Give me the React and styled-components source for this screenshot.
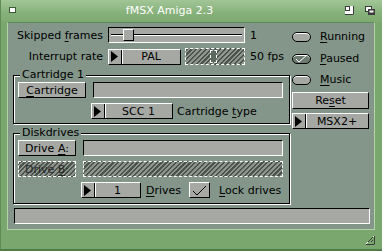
import React from 'react'
import styled, { createGlobalStyle, css } from 'styled-components'

const Global = createGlobalStyle`
  html, body { margin: 0; padding: 0; background: #79a76d; }
  body { font-family: "DejaVu Sans", "Liberation Sans", sans-serif; font-size: 11px; color: #000; }
`;

const PANEL = '#84968a';
const FACE = '#a6a8a3';

const Window = styled.div`
  width: 382px;
  height: 251px;
  box-sizing: border-box;
  background: #79a76d;
  border-left: 1px solid #5e8c53;
  border-bottom: 2px solid #4f7c46;
  display: flex;
  flex-direction: column;
`;

const TitleBar = styled.div`
  height: 22px;
  flex: none;
  display: flex;
  align-items: center;
  padding: 0 7px 2px 8px;
  box-sizing: border-box;
  background: linear-gradient(#a2c596, #86b17a 60%, #7eab72);
  color: #fff;
  font-size: 11px;
`;

const Title = styled.div`
  flex: 1;
  text-align: center;
  padding-right: 22px;
`;

const Gadgets = styled.div`
  display: flex;
  gap: 11px;
  align-items: center;
`;

const Frame = styled.div`
  flex: 1;
  display: flex;
  flex-direction: column;
  padding: 0 7px 0 6px;
`;

const Panel = styled.div`
  height: 208px;
  box-sizing: border-box;
  background: ${PANEL};
  border: 1px solid #b4d3a8;
  border-top-color: #5f8a55;
  padding: 4px 5px 0 5px;
  display: flex;
  flex-direction: column;
`;

const Foot = styled.div`
  flex: 1;
  display: flex;
  justify-content: flex-end;
  align-items: center;
`;

const Top = styled.div`
  display: flex;
  gap: 2px;
`;

const LeftCol = styled.div`
  width: 277px;
  display: flex;
  flex-direction: column;
`;

const RightCol = styled.div`
  width: 77px;
  display: flex;
  flex-direction: column;
  padding-top: 2px;
`;

const Row = styled.div`
  display: flex;
  align-items: center;
  height: ${p => p.$h || 16}px;
  margin-top: ${p => p.$mt || 0}px;
  padding-left: ${p => p.$pl || 0}px;
  gap: ${p => p.$gap || 0}px;
`;

const Label = styled.div`
  width: ${p => p.$w}px;
  text-align: ${p => p.$right ? 'right' : 'left'};
  padding-right: ${p => p.$right ? 5 : 0}px;
  padding-left: ${p => p.$pl || 0}px;
  box-sizing: border-box;
  white-space: nowrap;
`;

const raised = css`
  background: ${FACE};
  border-top: 1px solid #fff;
  border-left: 1px solid #fff;
  border-right: 1px solid #000;
  border-bottom: 1px solid #000;
`;

const recessed = css`
  background: ${FACE};
  border-top: 1px solid #000;
  border-left: 1px solid #000;
  border-right: 1px solid #fff;
  border-bottom: 1px solid #fff;
`;

const hatch = css`
  background: repeating-linear-gradient(135deg, #4a544d 0 1.6px, #8f948e 1.6px 3.4px);
  border: 1px dashed #fff;
`;

const Button = styled.div`
  ${p => p.$disabled ? hatch : raised};
  box-sizing: border-box;
  width: ${p => p.$w ? p.$w + 'px' : 'auto'};
  height: ${p => p.$h || 16}px;
  display: flex;
  align-items: center;
  justify-content: center;
  flex: none;
  color: ${p => p.$disabled ? '#2a2a2a' : '#000'};
  margin-top: ${p => p.$mt || 0}px;
`;

const Field = styled.div`
  ${p => p.$disabled ? hatch : recessed};
  box-sizing: border-box;
  flex: ${p => p.$w ? 'none' : 1};
  width: ${p => p.$w ? p.$w + 'px' : 'auto'};
  height: 16px;
`;

const Slider = styled.div`
  ${p => p.$disabled ? hatch : recessed};
  box-sizing: border-box;
  width: ${p => p.$w}px;
  height: ${p => p.$h || 16}px;
  margin-left: ${p => p.$ml || 0}px;
  flex: none;
  display: flex;
  align-items: center;
  position: relative;
`;

const Track = styled.div`
  flex: 1;
  height: 1px;
  margin: 0 2px;
  background: #000;
  border-bottom: 1px solid #fff;
`;

const Knob = styled.div`
  position: absolute;
  top: 1px;
  bottom: 1px;
  left: ${p => p.$x}px;
  width: ${p => p.$w}px;
  box-sizing: border-box;
  ${p => p.$disabled ? css`
    background: #5d685f;
    border: 1px dashed #fff;
  ` : raised};
`;

const Cycle = styled.div`
  ${raised};
  box-sizing: border-box;
  width: ${p => p.$w}px;
  height: 16px;
  flex: none;
  display: flex;
  align-items: center;
  margin-top: ${p => p.$mt || 0}px;
`;

const CycleArrow = styled.div`
  width: 13px;
  height: 100%;
  display: flex;
  align-items: center;
  padding-left: 2px;
  box-sizing: border-box;
  border-right: 1px solid #000;
  box-shadow: 1px 0 0 #fff;
`;

const CycleText = styled.div`
  flex: 1;
  text-align: center;
`;

const Group = styled.div`
  position: relative;
  margin-top: ${p => p.$mt}px;
  height: ${p => p.$h}px;
  box-sizing: border-box;
  padding: 6px 6px 0 4px;
  border: 1px solid #000;
  box-shadow: inset 1px 1px 0 #fff, 1px 1px 0 #fff;
  display: flex;
  flex-direction: column;
  gap: 5px;
`;

const GroupTitle = styled.div`
  position: absolute;
  top: -7px;
  left: 6px;
  padding: 0 2px;
  line-height: 12px;
  background: ${PANEL};
`;

const Check = styled.div`
  width: 19px;
  height: 10px;
  box-sizing: border-box;
  border-radius: 5px;
  border: 1px solid #000;
  background: ${p => p.$on ? '#6c7a70' : FACE};
  box-shadow: inset 0 1px 0 #fff;
  flex: none;
  display: flex;
  align-items: center;
  justify-content: center;
`;

const CheckRow = styled.div`
  display: flex;
  align-items: center;
  gap: 9px;
  height: ${p => p.$h}px;
  margin-top: ${p => p.$mt || 0}px;
`;

const Box = styled.div`
  ${raised};
  width: 21px;
  height: 16px;
  box-sizing: border-box;
  flex: none;
  margin-left: 3px;
  display: flex;
  align-items: center;
  justify-content: center;
`;

const Text = styled.span`
  white-space: pre;
  margin-left: ${p => p.$ml || 0}px;
`;

const U = styled.span`
  text-decoration: underline;
  text-underline-offset: 2px;
`;

const Arrow = () => (
  <svg width="8" height="11" viewBox="0 0 8 11">
    <path d="M0 0 L7 5.5 L0 11 Z" fill="#000" />
  </svg>
);

const Tick = () => (
  <svg width="15" height="11" viewBox="0 0 15 11">
    <path d="M1 6 L5 10 L14 1" stroke="#000" strokeWidth="1" fill="none" />
  </svg>
);

const CycleButton = ({ w, mt, children }) => (
  <Cycle $w={w} $mt={mt}>
    <CycleArrow><Arrow /></CycleArrow>
    <CycleText>{children}</CycleText>
  </Cycle>
);

const Toggle = ({ on, h, mt, children }) => (
  <CheckRow $h={h} $mt={mt}>
    <Check $on={on}>{on && (
      <svg width="13" height="8" viewBox="0 0 13 8">
        <path d="M1 4 L4 7 L12 0" stroke="#fff" strokeWidth="1" fill="none" />
      </svg>
    )}</Check>
    <Text>{children}</Text>
  </CheckRow>
);

export default function App() {
  return (
    <>
      <Global />
      <Window>
        <TitleBar>
          <svg width="7" height="6" viewBox="0 0 7 6">
            <rect x="0.5" y="0.5" width="6" height="5" fill="#fff" stroke="#3d5a37" />
          </svg>
          <Title>fMSX Amiga 2.3</Title>
          <Gadgets>
            <svg width="9" height="9" viewBox="0 0 9 9">
              <rect x="0" y="0" width="9" height="9" fill="#fff" />
              <rect x="0" y="0" width="5" height="5" fill="#3b3b3b" />
              <rect x="1" y="1" width="3" height="3" fill="#fff" />
              <path d="M8.5 0 V8.5 H0" stroke="#3b3b3b" fill="none" />
            </svg>
            <svg width="10" height="9" viewBox="0 0 10 9">
              <rect x="0.5" y="0.5" width="6" height="5" fill="#fff" stroke="#3b3b3b" />
              <rect x="3.5" y="3.5" width="6" height="5" fill="#3b3b3b" stroke="#3b3b3b" />
              <rect x="4.5" y="4.5" width="4" height="2" fill="#fff" />
            </svg>
          </Gadgets>
        </TitleBar>
        <Frame>
          <Panel>
            <Top>
              <LeftCol>
                <Row $h={16}>
                  <Label $w={95} $right>Skipped <U>f</U>rames</Label>
                  <Slider $w={137}>
                    <Track />
                    <Knob $x={14} $w={11} />
                  </Slider>
                  <Label $w={40} $pl={5}>1</Label>
                </Row>
                <Row $h={17} $mt={5}>
                  <Label $w={95} $right>Interrupt rate</Label>
                  <CycleButton w={73}>PAL</CycleButton>
                  <Slider $w={60} $h={17} $ml={4} $disabled>
                    <Knob $x={24} $w={7} $disabled />
                  </Slider>
                  <Label $w={40} $pl={5}>50 fps</Label>
                </Row>
                <Group $mt={10} $h={49}>
                  <GroupTitle>Cartridge 1</GroupTitle>
                  <Row $gap={7}>
                    <Button $w={68}><Text><U>C</U>artridge</Text></Button>
                    <Field />
                  </Row>
                  <Row $gap={4} $pl={73}>
                    <CycleButton w={82}>SCC 1</CycleButton>
                    <Text>Cartridge <U>t</U>ype</Text>
                  </Row>
                </Group>
                <Group $mt={9} $h={71}>
                  <GroupTitle>Diskdrives</GroupTitle>
                  <Row $gap={7}>
                    <Button $w={58}><Text>Drive <U>A</U>:</Text></Button>
                    <Field />
                  </Row>
                  <Row $gap={7}>
                    <Button $w={58} $disabled><Text>Drive <U>B</U>:</Text></Button>
                    <Field $disabled />
                  </Row>
                  <Row $gap={5} $pl={63}>
                    <CycleButton w={60}>1</CycleButton>
                    <Text><U>D</U>rives</Text>
                    <Box><Tick /></Box>
                    <Text $ml={4}><U>L</U>ock drives</Text>
                  </Row>
                </Group>
              </LeftCol>
              <RightCol>
                <Toggle h={15}><U>R</U>unning</Toggle>
                <Toggle h={15} mt={7} on><U>P</U>aused</Toggle>
                <Toggle h={15} mt={6}><U>M</U>usic</Toggle>
                <Button $h={17} $mt={5}><Text>Re<U>s</U>et</Text></Button>
                <CycleButton w={77} mt={4}>MSX2+</CycleButton>
              </RightCol>
            </Top>
            <Row $mt={4} $pl={1}>
              <Field $w={356} />
            </Row>
          </Panel>
          <Foot>
            <svg width="10" height="10" viewBox="0 0 10 10">
              <path d="M9.5 0.5 V9.5 H0.5 Z" fill="#79a76d" stroke="#fff" />
              <path d="M3 7 L8 2 M6 7 L8 5" stroke="#3b3b3b" />
              <path d="M0.5 9.5 H9.5 V0.5" stroke="#3b3b3b" fill="none" />
            </svg>
          </Foot>
        </Frame>
      </Window>
    </>
  );
}
